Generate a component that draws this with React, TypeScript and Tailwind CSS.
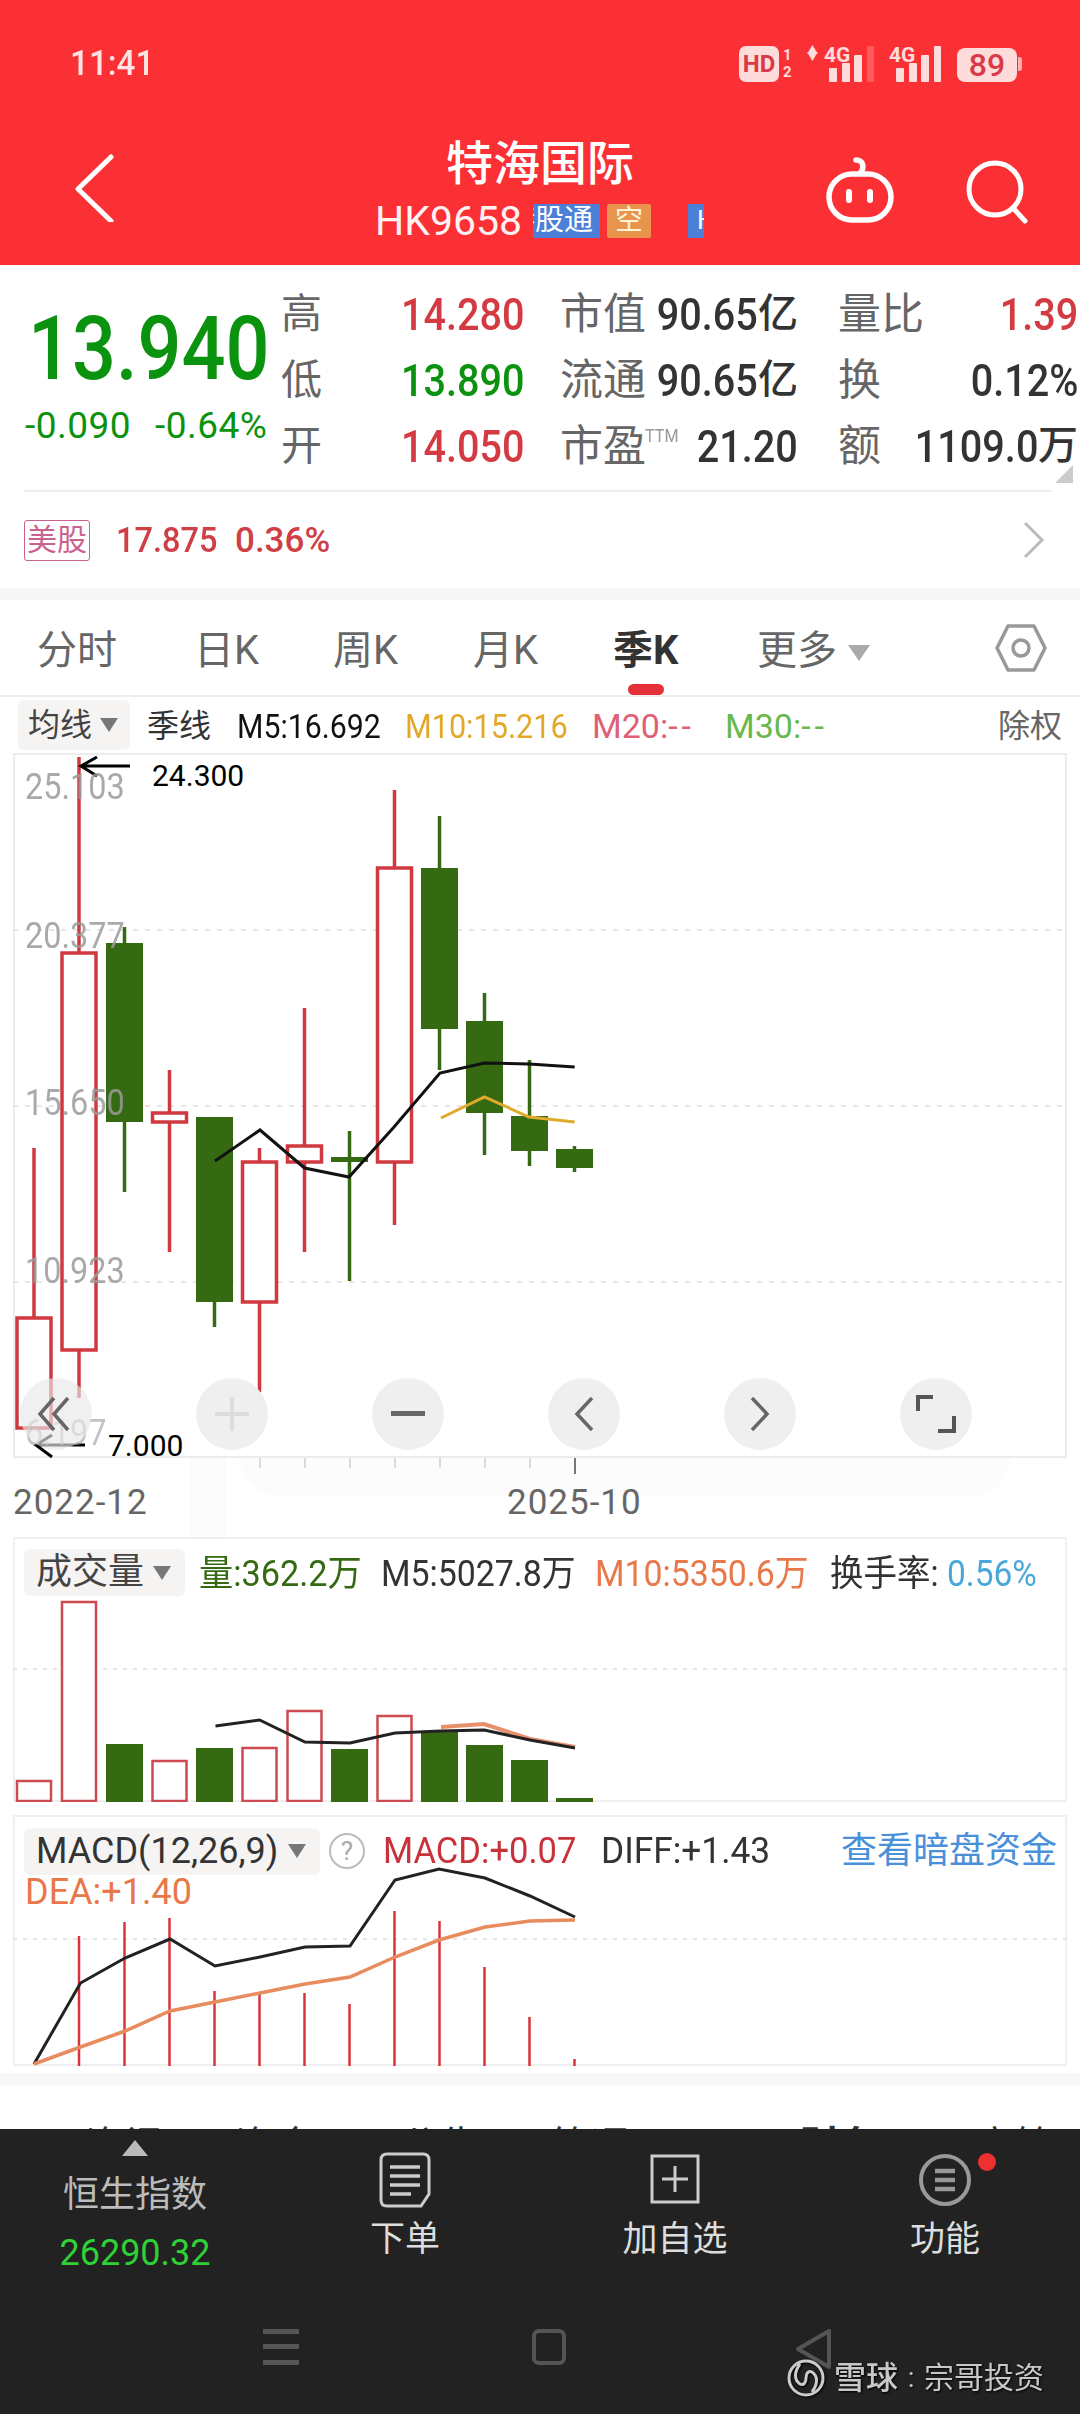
import React from "react";

const RED = "#d0393f";
const GRN = "#356a12";
const xs = [34, 79, 124.5, 169.5, 214.5, 259.5, 304.5, 349.5, 394.5, 439.5, 484.5, 529.5, 574.5];

type C = { h: number; t: number; b: number; l: number; up: boolean };
const candles: C[] = [
  { h: 1148, t: 1318, b: 1428, l: 1428, up: true },
  { h: 757, t: 953, b: 1350, l: 1398, up: true },
  { h: 927, t: 943, b: 1122, l: 1192, up: false },
  { h: 1070, t: 1113, b: 1122, l: 1252, up: true },
  { h: 1117, t: 1117, b: 1302, l: 1327, up: false },
  { h: 1148, t: 1162, b: 1302, l: 1392, up: true },
  { h: 1008, t: 1146, b: 1162, l: 1252, up: true },
  { h: 1131, t: 1157, b: 1162, l: 1281, up: false },
  { h: 790, t: 868, b: 1162, l: 1225, up: true },
  { h: 816, t: 868, b: 1029, l: 1070, up: false },
  { h: 993, t: 1021, b: 1113, l: 1155, up: false },
  { h: 1060, t: 1116, b: 1151, l: 1166, up: false },
  { h: 1146, t: 1149, b: 1168, l: 1172, up: false },
];
const vols = [1781, 1602, 1744, 1761, 1748, 1748, 1711, 1749, 1716, 1732, 1745, 1760, 1798];
const macdTops = [1936, 1922, 1918, 1991, 1994, 1993, 2004, 1911, 1921, 1967, 2017, 2059];

const Tri = ({ c = "fill-[#777]", w = 18, h = 14 }: { c?: string; w?: number; h?: number }) => (
  <svg width={w} height={h} viewBox="0 0 18 14" className={c} preserveAspectRatio="none">
    <polygon points="0,0 18,0 9,14" />
  </svg>
);

const Sig = ({ faint }: { faint?: boolean }) => (
  <svg width="46" height="36" viewBox="0 0 46 36" className="fill-[#ffdcdc]">
    <rect x="0" y="22" width="8" height="14" rx="1" />
    <rect x="13" y="17" width="8" height="19" rx="1" />
    <rect x="25" y="9" width="8" height="27" rx="1" />
    <rect x="38" y="0" width="7" height="36" rx="1" opacity={faint ? 0.25 : 1} />
  </svg>
);

export default function App() {
  return (
    <div className="relative w-[1080px] h-[2414px] overflow-hidden bg-white flex flex-col font-['Roboto','Noto_Sans_CJK_SC',sans-serif]">
      {/* Header */}
      <header className="h-[265px] shrink-0 bg-[#fb3035] text-white flex flex-col">
        <div className="h-[128px] flex items-start pt-[46px] pl-[70px] pr-[58px]">
          <span className="text-[35px] leading-[36px] font-medium text-[#ffe3e3] w-[100px] inline-block origin-left scale-x-[.95]">11:41</span>
          <div className="ml-auto flex items-start text-[#ffdcdc]">
            <span className="w-[40px] h-[36px] rounded-[7px] bg-[#ffdcdc] text-[#d93a48] text-[24px] leading-[36px] font-bold text-center">HD</span>
            <span className="ml-[4px] w-[10px] flex flex-col text-[15px] leading-[17px] font-bold mt-[1px]"><span>1</span><span>2</span></span>
            <span className="ml-[14px] mt-[1px] w-[11px] text-[11px] leading-[7px] flex flex-col items-center"><span>▲</span><span>▼</span></span>
            <span className="relative ml-[6px] w-[50px] h-[36px]">
              <span className="absolute left-0 -top-[1px] text-[21px] leading-[20px] font-bold">4G</span>
              <span className="absolute left-[5px] top-0"><Sig faint /></span>
            </span>
            <span className="relative ml-[15px] w-[52px] h-[36px]">
              <span className="absolute left-0 -top-[1px] text-[21px] leading-[20px] font-bold">4G</span>
              <span className="absolute left-[7px] top-0"><Sig /></span>
            </span>
            <span className="ml-[16px] mt-[2px] w-[60px] h-[34px] rounded-[8px] bg-[#ffdcdc] text-[#d93a48] text-[32px] leading-[34px] font-medium text-center">89</span>
            <span className="mt-[11px] ml-[1px] w-[4px] h-[14px] rounded-r-[3px] bg-[#ffb0b0]" />
          </div>
        </div>
        <div className="relative flex-1 flex flex-col items-center">
          <span className="text-[47px] leading-[47px] mt-[12px] font-medium">特海国际</span>
          <div className="flex items-center mt-[16px] h-[36px] w-[330px]">
            <span className="w-[158px] text-[41px] leading-[36px] text-[#fff2f2] whitespace-nowrap">HK9658</span>
            <span className="w-[67px] h-[34px] bg-[#4b7fd8] overflow-hidden flex justify-end pr-[7px] text-[29px] leading-[32px] whitespace-nowrap">
              <span className="shrink-0">港股通</span>
            </span>
            <span className="ml-[7px] w-[44px] h-[34px] bg-[#e8944c] text-[#fff3d8] text-[28px] leading-[33px] text-center rounded-[2px]">空</span>
            <span className="ml-[37px] w-[16px] h-[34px] bg-[#4b7fd8] overflow-hidden pl-[9px] text-[26px] leading-[33px]">H</span>
          </div>
          <svg className="absolute left-[70px] top-[24px]" width="50" height="70" viewBox="0 0 50 70" fill="none" stroke="#fff" strokeWidth="5" strokeLinecap="round" strokeLinejoin="round">
            <polyline points="41,5 8,37 41,69" />
          </svg>
          <svg className="absolute left-[820px] top-[28px]" width="80" height="70" viewBox="0 0 80 70" fill="none" stroke="#fff" strokeWidth="5.5">
            <path d="M36 4 C44 4 44 12 41 16" strokeLinecap="round" />
            <rect x="9" y="18" width="62" height="46" rx="23" />
            <rect x="26" y="33" width="6" height="14" rx="3" fill="#fff" stroke="none" />
            <rect x="47" y="33" width="6" height="14" rx="3" fill="#fff" stroke="none" />
          </svg>
          <svg className="absolute left-[960px] top-[28px]" width="72" height="70" viewBox="0 0 72 70" fill="none" stroke="#fff" strokeWidth="5" strokeLinecap="round">
            <circle cx="35" cy="33" r="26" />
            <line x1="53" y1="52" x2="65" y2="65" />
          </svg>
        </div>
      </header>

      {/* Quote */}
      <section className="h-[323px] shrink-0 relative flex flex-col">
        <div className="flex pt-[16px] h-[227px] border-b-2 border-[#eeeeee] ml-[24px] w-[1028px]">
          <div className="w-[257px] shrink-0">
            <div className="h-[100px] mt-[18px] ml-[4px] text-[89px] leading-[100px] text-[#0b930f] font-medium whitespace-nowrap origin-left scale-x-[.87]">13.940</div>
            <div className="flex mt-[9px] text-[37px] leading-[36px] text-[#0b930f]">
              <span className="w-[130px] ml-[1px] tracking-[.5px]">-0.090</span>
              <span className="whitespace-nowrap tracking-[.5px]">-0.64%</span>
            </div>
          </div>
          <div className="flex flex-col text-[#666]">
            {[
              ["高", "14.280", "text-[#d43a42]", "市值", "90.65", "亿", "量比", "1.39", "text-[#d43a42]"],
              ["低", "13.890", "text-[#0b930f]", "流通", "90.65", "亿", "换", "0.12%", "text-[#333]"],
              ["开", "14.050", "text-[#d43a42]", "市盈", "21.20", "", "额", "1109.0", "text-[#333]"],
            ].map((r, i) => (
              <div key={i} className="h-[66px] flex items-center whitespace-nowrap leading-none text-[41px]">
                <span className="w-[120px]">{r[0]}</span>
                <span className={`w-[159px] text-[45px] font-medium origin-left scale-x-[.88] ${r[2]}`}>{r[1]}</span>
                <span className="w-[85px] relative text-[43px]">
                  {r[3]}
                  {i === 2 && <span className="absolute left-[85px] top-[1px] text-[19px] text-[#999] origin-left scale-x-[.85]">TTM</span>}
                </span>
                <span className="w-[153px] flex justify-end text-[#333] items-center">
                  <span className="text-[45px] font-medium origin-right scale-x-[.88]">{r[4]}</span>
                  {r[5] && <span className="font-medium w-[40px] text-[40px]">{r[5]}</span>}
                </span>
                <span className="ml-[40px] w-[87px] text-[43px]">{r[6]}</span>
                <span className={`w-[153px] flex justify-end items-center ${r[8]}`}>
                  <span className="text-[45px] font-medium origin-right scale-x-[.88]">{r[7]}</span>
                  {i === 2 && <span className="w-[40px] text-[40px] font-medium text-[#333]">万</span>}
                </span>
              </div>
            ))}
          </div>
        </div>
        <svg className="absolute left-[1055px] top-[200px]" width="18" height="18" viewBox="0 0 18 18"><polygon points="18,0 18,18 0,18" fill="#cccccc" /></svg>
        <div className="flex items-center h-[96px] pl-[24px] pr-[35px] leading-none whitespace-nowrap">
          <span className="w-[66px] h-[41px] rounded-[3px] border border-[#c9628f] text-[#c9628f] text-[30px] leading-[38px] text-center">美股</span>
          <span className="ml-[26px] w-[119px] text-[35px] font-medium text-[#cf3f46] origin-left scale-x-[.93]">17.875</span>
          <span className="text-[35px] font-medium text-[#cf3f46] origin-left">0.36%</span>
          <svg className="ml-auto" width="22" height="38" viewBox="0 0 22 38" fill="none" stroke="#bbbbbb" strokeWidth="3"><polyline points="2,2 19,19 2,36" /></svg>
        </div>
      </section>
      <div className="h-[12px] shrink-0 bg-[#f7f7f7]" />

      {/* Tabs */}
      <nav className="relative h-[97px] shrink-0 border-b-2 border-[#eeeeee] flex items-start pt-[29px] text-[40px] leading-[44px] text-[#666] whitespace-nowrap">
        <span className="ml-[37px] w-[157px]">分时</span>
        <span className="w-[139px]">日K</span>
        <span className="w-[140px]">周K</span>
        <span className="w-[140px]">月K</span>
        <span className="w-[144px] font-bold text-[#333]">季K</span>
        <span className="w-[91px]">更多</span>
        <span className="mt-[16px]"><Tri c="fill-[#aaaaaa]" w={22} h={16} /></span>
        <svg className="absolute left-[995px] top-[23px]" width="52" height="50" viewBox="0 0 52 50" fill="none" stroke="#999" strokeWidth="3.5">
          <polygon points="13,3 39,3 50,25 39,47 13,47 2,25" strokeLinejoin="round" />
          <circle cx="26" cy="25" r="8" />
        </svg>
        <span className="absolute left-[628px] bottom-0 w-[36px] h-[11px] rounded-full bg-[#e5303a]" />
      </nav>

      {/* MA row */}
      <div className="relative h-[56px] shrink-0 flex items-start pt-[3px] pl-[18px] text-[32px] leading-[52px] whitespace-nowrap">
        <span className="w-[112px] h-[50px] rounded-[6px] bg-[#f6f3f3] flex items-center pl-[10px] text-[#444]">
          均线<span className="ml-[8px]"><Tri /></span>
        </span>
        <span className="ml-[17px] w-[90px] text-[#333]">季线</span>
        <span className="w-[168px] text-[34px] text-[#111] origin-left scale-x-[.89]">M5:16.692</span>
        <span className="w-[187px] text-[34px] text-[#e3a72a] origin-left scale-x-[.9]">M10:15.216</span>
        <span className="w-[133px] text-[34px] text-[#df6075] origin-left">M20:<span className="tracking-[4px]">--</span></span>
        <span className="text-[34px] text-[#68b84b] origin-left">M30:<span className="tracking-[4px]">--</span></span>
        <span className="absolute left-[998px] top-[3px] text-[#666]">除权</span>
      </div>

      {/* Main chart */}
      <div className="relative mx-[13px] h-[705px] shrink-0 border-2 border-[#ececec]">
        <svg className="absolute -left-[2px] -top-[2px]" width="1054" height="705" viewBox="13 753 1054 705" fill="none">
          {[930, 1106, 1282].map((y) => (
            <line key={y} x1="13" x2="1067" y1={y} y2={y} stroke="#e6e6e6" strokeWidth="2" strokeDasharray="5 7" />
          ))}
          {candles.map((c, i) => {
            const x = xs[i];
            const col = c.up ? RED : GRN;
            return (
              <g key={i}>
                <line x1={x} x2={x} y1={c.h} y2={c.t} stroke={col} strokeWidth="3.5" />
                <line x1={x} x2={x} y1={c.b} y2={c.l} stroke={col} strokeWidth="3.5" />
                {c.up ? (
                  <rect x={x - 17} y={c.t} width="34" height={c.b - c.t} fill="#fff" stroke={RED} strokeWidth="3.5" />
                ) : (
                  <rect x={x - 18.5} y={c.t} width="37" height={c.b - c.t} fill={GRN} />
                )}
              </g>
            );
          })}
          <polyline points="215,1161 260,1130 304.5,1168 349,1177 394,1127 440,1073 484.5,1063 529,1064 574.7,1067" stroke="#111" strokeWidth="3" />
          <polyline points="441,1118 484.5,1097 529,1117 574.7,1122" stroke="#e0aa2c" strokeWidth="3" />
          <path d="M130 766 H81 M97 757 L81 766 L97 776" stroke="#000" strokeWidth="3" />
          <path d="M85 1445 H36 M52 1435 L36 1445 L52 1457" stroke="#000" strokeWidth="3" />
        </svg>
        <span className="absolute left-[10px] top-[14px] text-[36px] leading-[36px] text-[#9a9a9a]/85 origin-left scale-x-[.9]">25.103</span>
        <span className="absolute left-[10px] top-[163px] text-[36px] leading-[36px] text-[#9a9a9a]/85 origin-left scale-x-[.9]">20.377</span>
        <span className="absolute left-[10px] top-[330px] text-[36px] leading-[36px] text-[#9a9a9a]/85 origin-left scale-x-[.9]">15.650</span>
        <span className="absolute left-[10px] top-[498px] text-[36px] leading-[36px] text-[#9a9a9a]/85 origin-left scale-x-[.9]">10.923</span>
        <span className="absolute left-[10px] top-[660px] text-[36px] leading-[36px] text-[#9a9a9a]/60 origin-left scale-x-[.9]">6.197</span>
        <span className="absolute left-[137px] top-[6px] text-[30px] leading-[30px] text-black">24.300</span>
        <span className="absolute left-[93px] top-[676px] text-[30px] leading-[30px] text-black">7.000</span>
        <div className="absolute left-[5px] top-[623px] flex gap-[104px]">
          <span className="w-[72px] h-[72px] rounded-full bg-[#e8e8e8]/65 flex items-center justify-center">
            <svg width="40" height="40" viewBox="0 0 40 40" fill="none" stroke="#666" strokeWidth="3.5"><path d="M18 4 L4 20 L18 36 M32 4 L18 20 L32 36" /></svg>
          </span>
          <span className="w-[72px] h-[72px] rounded-full bg-[#efefef] flex items-center justify-center">
            <svg width="34" height="34" viewBox="0 0 34 34" stroke="#dcdcdc" strokeWidth="4"><path d="M0 17 H34 M17 0 V34" /></svg>
          </span>
          <span className="w-[72px] h-[72px] rounded-full bg-[#efefef] flex items-center justify-center">
            <svg width="34" height="6" viewBox="0 0 34 6"><rect width="34" height="5" fill="#666" /></svg>
          </span>
          <span className="w-[72px] h-[72px] rounded-full bg-[#efefef] flex items-center justify-center">
            <svg width="22" height="36" viewBox="0 0 22 36" fill="none" stroke="#666" strokeWidth="3.5"><polyline points="19,2 4,18 19,34" /></svg>
          </span>
          <span className="w-[72px] h-[72px] rounded-full bg-[#efefef] flex items-center justify-center">
            <svg width="22" height="36" viewBox="0 0 22 36" fill="none" stroke="#666" strokeWidth="3.5"><polyline points="3,2 18,18 3,34" /></svg>
          </span>
          <span className="w-[72px] h-[72px] rounded-full bg-[#efefef] flex items-center justify-center">
            <svg width="40" height="38" viewBox="0 0 40 38" fill="none" stroke="#555" strokeWidth="4"><path d="M2 16 V2 H17 M38 21 V36 H22" /></svg>
          </span>
        </div>
      </div>

      {/* Dates */}
      <div className="relative h-[79px] shrink-0 overflow-hidden">
        <div className="absolute left-[190px] top-0 w-[36px] h-[79px] bg-[#fbfbfb]" />
        <div className="absolute left-[240px] top-0 w-[770px] h-[38px] rounded-b-[200px] bg-[#fcfcfc]" />
        <svg className="absolute left-0 top-0" width="1080" height="20" viewBox="0 0 1080 20" stroke="#cfcfcf" strokeWidth="1.5">
          {[260, 305, 350, 395, 440, 485, 530].map((x) => <line key={x} x1={x} x2={x} y1="0" y2="10" />)}
          <line x1="575" x2="575" y1="0" y2="16" stroke="#777" strokeWidth="2" />
        </svg>
        <span className="absolute left-[13px] top-[30px] text-[35px] leading-[30px] text-[#666] tracking-[1px]">2022-12</span>
        <span className="absolute left-[507px] top-[30px] text-[35px] leading-[30px] text-[#666] tracking-[1px]">2025-10</span>
      </div>

      {/* Volume */}
      <div className="relative mx-[13px] h-[265px] shrink-0 border-2 border-b-[2px] border-[#efefef]">
        <svg className="absolute -left-[2px] -top-[2px]" width="1054" height="265" viewBox="13 1537 1054 265" fill="none">
          <line x1="13" x2="1067" y1="1669" y2="1669" stroke="#e6e6e6" strokeWidth="2" strokeDasharray="4 6" />
          {vols.map((t, i) =>
            i === 0 || i === 1 || i === 3 || i === 5 || i === 6 || i === 8 ? (
              <rect key={i} x={xs[i] - 17} y={t} width="34" height={1801 - t} fill="#fff" stroke="#cc4a50" strokeWidth="2.5" />
            ) : (
              <rect key={i} x={xs[i] - 18.5} y={t} width="37" height={1802 - t} fill={GRN} />
            )
          )}
          <polyline points="441,1727 484,1724 530,1739 575,1747" stroke="#e8906a" strokeWidth="4" />
          <polyline points="215.5,1726 259.6,1720 305,1742 350,1743 395,1733 441,1731 484,1730 530,1740 575,1748" stroke="#222" strokeWidth="3" />
        </svg>
        <div className="relative flex items-start pl-[9px] pt-[10px] text-[36px] leading-[51px] whitespace-nowrap">
          <span className="w-[161px] h-[47px] rounded-[6px] bg-[#f6f3f3] flex items-center pl-[12px] text-[#444]">
            成交量<span className="ml-[9px]"><Tri /></span>
          </span>
          <span className="ml-[14px] w-[182px] text-[#356a12] origin-left scale-x-[.95]">量:362.2万</span>
          <span className="w-[214px] text-[#333] origin-left scale-x-[.94]">M5:5027.8万</span>
          <span className="w-[235px] text-[#e8784a] origin-left scale-x-[.94]">M10:5350.6万</span>
          <span className="w-[117px] text-[#333] origin-left scale-x-[.93]">换手率:</span>
          <span className="text-[#4aa8d8] origin-left scale-x-[.93]">0.56%</span>
        </div>
      </div>

      <div className="h-[13px] shrink-0" />

      {/* MACD */}
      <div className="relative mx-[13px] h-[251px] shrink-0 border-2 border-[#efefef]">
        <svg className="absolute -left-[2px] -top-[2px]" width="1054" height="251" viewBox="13 1815 1054 251" fill="none">
          <line x1="13" x2="1067" y1="1939" y2="1939" stroke="#e6e6e6" strokeWidth="2" strokeDasharray="4 6" />
          {macdTops.map((t, i) => (
            <line key={i} x1={xs[i + 1]} x2={xs[i + 1]} y1={t} y2="2066" stroke="#d9343a" strokeWidth="2.5" />
          ))}
          <polyline points="34,2064 80.5,1983 125,1958 170,1939 215,1966 260,1957 305,1947 350,1946 395,1880 439,1869 485,1878 530,1896 575,1917" stroke="#222" strokeWidth="3" />
          <polyline points="34,2064 80.5,2047 125,2031 170,2011 215,2002 260,1993 305,1984 350,1977 395,1957 439,1940 485,1927 530,1921 575,1920" stroke="#e88b5e" strokeWidth="3.5" />
        </svg>
        <div className="relative flex items-center pl-[9px] pt-[9px] text-[36px] leading-[47px] whitespace-nowrap">
          <span className="w-[296px] h-[47px] rounded-[6px] bg-[#f6f3f3] flex items-center pl-[12px] text-[#333]">
            <span className="w-[252px] text-[36px] leading-[50px] origin-left">MACD(12,26,9)</span><Tri />
          </span>
          <span className="ml-[9px] w-[36px] h-[36px] rounded-full border-2 border-[#bbb] text-[#aaa] text-[26px] leading-[32px] text-center">?</span>
          <span className="ml-[18px] w-[218px] text-[#c8323a] text-[36px] leading-[50px] origin-left scale-x-[.96]">MACD:+0.07</span>
          <span className="w-[240px] text-[#333] text-[36px] leading-[50px] origin-left scale-x-[.98]">DIFF:+1.43</span>
          <span className="text-[#4a90d9]">查看暗盘资金</span>
        </div>
        <span className="absolute left-[10px] top-[57px] text-[36px] leading-[36px] text-[#e8784a] origin-left">DEA:+1.40</span>
      </div>

      <div className="h-[7px] shrink-0" />
      <div className="h-[12px] shrink-0 bg-[#f7f7f7]" />

      {/* Clipped sub tabs */}
      <div className="h-[44px] shrink-0 overflow-hidden flex text-[40px] leading-[44px] pt-[40px] text-[#333] whitespace-nowrap">
        <span className="ml-[85px] w-[150px]">资讯</span>
        <span className="w-[165px]">资金</span>
        <span className="w-[150px]">公告</span>
        <span className="w-[250px]">简况</span>
        <span className="w-[175px] font-bold">财务</span>
        <span>高管</span>
      </div>

      {/* Footer */}
      <footer className="relative flex-1 bg-[#222222] flex flex-col">
        <div className="h-[200px] grid grid-cols-4">
          <div className="flex flex-col items-center pt-[11px]">
            <svg width="26" height="16" viewBox="0 0 26 16"><polygon points="13,0 26,16 0,16" fill="#bbb" /></svg>
            <span className="mt-[17px] text-[36px] leading-[44px] text-[#bbb]">恒生指数</span>
            <span className="mt-[18px] text-[36px] leading-[36px] text-[#2ed136]">26290.32</span>
          </div>
          <div className="flex flex-col items-center pt-[23px]">
            <svg width="52" height="56" viewBox="0 0 52 56" fill="none" stroke="#ccc" strokeWidth="3"><path d="M8 2 H44 Q50 2 50 8 V42 L42 54 H8 Q2 54 2 48 V8 Q2 2 8 2 Z" /><path d="M11 15 H41 M11 24 H41 M11 33 H41 M11 42 H32" strokeWidth="3.5" /></svg>
            <span className="mt-[10px] text-[35px] leading-[44px] text-[#ddd]">下单</span>
          </div>
          <div className="flex flex-col items-center pt-[25px]">
            <svg width="50" height="50" viewBox="0 0 50 50" fill="none" stroke="#ccc" strokeWidth="3"><rect x="2" y="2" width="46" height="46" /><path d="M12 25 H38 M25 12 V38" /></svg>
            <span className="mt-[14px] text-[35px] leading-[44px] text-[#ddd]">加自选</span>
          </div>
          <div className="relative flex flex-col items-center pt-[24px]">
            <svg width="54" height="54" viewBox="0 0 54 54" fill="none" stroke="#999" strokeWidth="4"><circle cx="27" cy="27" r="24" /><path d="M17 18 H37 M17 27 H37 M17 36 H37" strokeWidth="4.5" /></svg>
            <span className="mt-[11px] text-[35px] leading-[44px] text-[#ddd]">功能</span>
            <span className="absolute left-[168px] top-[24px] w-[18px] h-[18px] rounded-full bg-[#ee3030]" />
          </div>
        </div>
        <div className="flex items-start h-[85px] pl-[263px]">
          <svg width="36" height="36" viewBox="0 0 36 36" fill="#555"><rect y="0" width="36" height="5" /><rect y="15" width="36" height="5" /><rect y="31" width="36" height="5" /></svg>
          <span className="ml-[233px] w-[34px] h-[36px] rounded-[7px] border-4 border-[#555]" />
          <svg className="ml-[229px]" width="36" height="40" viewBox="0 0 36 40" fill="none" stroke="#555" strokeWidth="4" strokeLinejoin="round"><polygon points="34,2 34,38 3,20" /></svg>
        </div>
        <div className="absolute left-[786px] top-[229px] flex items-center whitespace-nowrap text-[#c8c8c8] drop-shadow-[1px_1px_1px_#000]">
          <svg width="40" height="40" viewBox="0 0 40 40" fill="none" stroke="#ccc" strokeWidth="3"><circle cx="20" cy="20" r="17" /><path d="M14 6 C8 14 8 22 14 26 C18 28 20 24 20 20 C20 16 22 12 26 14 C32 18 32 26 26 34" /></svg>
          <span className="ml-[8px] text-[32px] leading-[36px] font-medium">雪球</span>
          <span className="w-[26px] text-center text-[28px] leading-[36px]">:</span>
          <span className="text-[30px] leading-[36px]">宗哥投资</span>
        </div>
      </footer>
    </div>
  );
}
